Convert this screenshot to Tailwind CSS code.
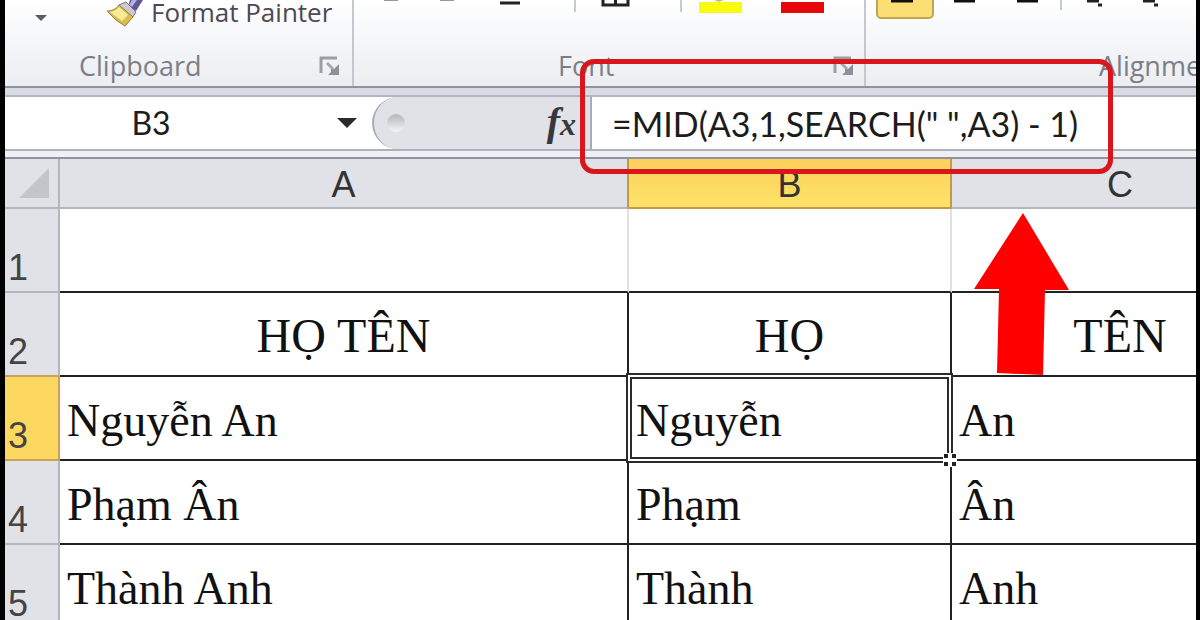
<!DOCTYPE html>
<html lang="vi">
    <head>
        <meta charset="UTF-8" />
        <meta name="viewport" content="width=device-width, initial-scale=1.0" />
        <title>Excel - MID / SEARCH</title>
        <script src="https://cdn.jsdelivr.net/npm/@tailwindcss/browser@4"></script>
    </head>
    <body class="bg-black">
        <div class="relative h-screen overflow-hidden border-l-[5px] border-r-4 border-black bg-white flex flex-col">
            <!-- Ribbon -->
            <header class="flex shrink-0 h-[88px] border-b-2 border-[#8f929e] bg-linear-to-b from-white to-[#ebedf1] font-['Open_Sans',sans-serif] text-[#7b7e88]">
                <section class="flex flex-col justify-between shrink-0 w-[349px] border-r-2 border-[#c4c7cf]">
                    <div class="flex items-start pl-[29px]">
                        <button aria-label="Paste options" class="pt-[14px]">
                            <svg class="w-[14px] h-[8px]" viewBox="0 0 14 8"><path d="M1 1h12L7 7z" fill="#5a5d66" /></svg>
                        </button>
                        <button class="flex items-start pl-[57px] text-[#4d4854]">
                            <svg class="w-[42px] h-[27px] mr-[4px]" viewBox="0 0 42 27">
                                <path d="M25 0h13l-7 11-8-5z" fill="#5d5799" />
                                <path d="M27 0h5l-5 7-3-2z" fill="#b5b0dc" />
                                <path d="M21 2l10 10-4 6L14 5z" fill="#cfcad2" stroke="#77717c" />
                                <path d="M14 5l14 12-8 9-9-6-9-9c5 0 9-2 12-6z" fill="#d9be4e" stroke="#96803a" />
                                <path d="M14 7l9 8-6 6-12-9c4-1 7-2 9-5z" fill="#f6eb96" />
                            </svg>
                            <span class="text-[26px] leading-[24px] whitespace-nowrap">Format Painter</span>
                        </button>
                    </div>
                    <div class="flex items-center justify-between pl-[74px] pr-[11px]">
                        <span class="text-[27px] leading-[40px]">Clipboard</span>
                        <button aria-label="Clipboard settings">
                            <svg class="w-[22px] h-[22px]" viewBox="0 0 22 22"><path d="M2 18V3h16" fill="none" stroke="#9b9ea6" stroke-width="3" /><path d="M8 8l6 6" stroke="#a5a8b0" stroke-width="3" /><path d="M20 9v11H9z M12 14h8v6h-8z" fill="#8e9199" /></svg>
                        </button>
                    </div>
                </section>
                <section class="flex flex-col justify-between shrink-0 w-[512px] border-r-2 border-[#c4c7cf]">
                    <svg class="w-[510px] h-[20px]" viewBox="354 0 510 20">
                        <path d="M384 0h14M440 0h14" stroke="#999" stroke-width="2" />
                        <path d="M500 3h20" stroke="#222" stroke-width="3" />
                        <path d="M575 0v12M681 0v12" stroke="#c9cbd2" stroke-width="2" />
                        <path d="M603 0v5h25V0M615.500 0v5" fill="none" stroke="#222" stroke-width="3" />
                        <rect x="699" y="2" width="43" height="11" fill="#fafa10" />
                        <path d="M714 0h10l-5 2z" fill="#c9c46a" />
                        <rect x="781" y="2" width="43" height="11" fill="#e8080c" />
                    </svg>
                    <div class="flex items-center justify-between pl-[204px] pr-[9px]">
                        <span class="text-[27px] leading-[40px]">Font</span>
                        <button aria-label="Font settings">
                            <svg class="w-[22px] h-[22px]" viewBox="0 0 22 22"><path d="M2 18V3h16" fill="none" stroke="#9b9ea6" stroke-width="3" /><path d="M8 8l6 6" stroke="#a5a8b0" stroke-width="3" /><path d="M20 9v11H9z M12 14h8v6h-8z" fill="#8e9199" /></svg>
                        </button>
                    </div>
                </section>
                <section class="flex flex-col justify-between grow overflow-hidden">
                    <svg class="w-[330px] h-[20px] shrink-0" viewBox="866 0 330 20">
                        <rect x="877" y="-20" width="56" height="38" rx="4" fill="#fbdf74" stroke="#bfa650" stroke-width="2" />
                        <path d="M891 1h22M954 1h21M1017 1h21" stroke="#111" stroke-width="3" />
                        <path d="M1061 0v10" stroke="#c9cbd2" stroke-width="2" />
                        <path d="M1087 1h12M1143 1h12M1098 5h4M1154 5h4" stroke="#222" stroke-width="3" />
                    </svg>
                    <span class="pl-[233px] text-[27px] leading-[40px]">Alignment</span>
                </section>
            </header>
            <div class="shrink-0 h-[9px] border-b-2 border-[#b3b6bf] bg-[#d9dbe3]"></div>

            <!-- Formula bar -->
            <div class="flex shrink-0 h-[54px] border-b-2 border-[#aeb1ba] bg-white font-[Lato,sans-serif] text-[34px] text-[#1c1c1c] [font-kerning:none]">
                <input aria-label="Name box" value="B3" class="w-[292px] text-center text-[32px] outline-none" />
                <button aria-label="Names" class="w-[75px] pl-[39px]">
                    <svg class="w-[22px] h-[12px]" viewBox="0 0 22 12"><path d="M1 1h20L11 11z" fill="#2b2b2b" /></svg>
                </button>
                <div class="flex items-center justify-between w-[218px] pl-[13px] pr-[14px] rounded-l-full border-l-2 border-[#a9acb5] bg-[#e0e2e8]">
                    <span class="w-[18px] h-[18px] rounded-full bg-linear-to-b from-[#b4b5b9] to-[#f6f6f8]"></span>
                    <button aria-label="Insert function" class="font-['Liberation_Serif',serif] italic font-bold text-[#38383c] text-[40px] leading-[40px]">f<span class="text-[32px]">x</span></button>
                </div>
                <input aria-label="Formula" value='=MID(A3,1,SEARCH(" ",A3) - 1)' class="grow min-w-0 pl-[20px] border-l-2 border-[#a9acb5] outline-none" />
            </div>
            <div class="shrink-0 h-[8px] border-b-2 border-[#9194a0] bg-[#eff0f6]"></div>

            <!-- Sheet -->
            <main class="grow overflow-hidden">
                <table class="table-fixed w-[1283px] border-separate border-spacing-0 font-['Liberation_Serif',serif] text-[46px] leading-[50px] text-[#111]">
                    <colgroup>
                        <col class="w-[55px]" />
                        <col class="w-[569px]" />
                        <col class="w-[323px]" />
                        <col class="w-[336px]" />
                    </colgroup>
                    <thead class="font-['Liberation_Sans',sans-serif] text-[36px] leading-[46px] text-[#333] bg-[#e0e2e8]">
                        <tr class="h-[50px]">
                            <th class="p-0 border-b-2 border-r-2 border-[#b3b6bc]">
                                <svg class="w-[30px] h-[30px] ml-[14px]" viewBox="0 0 30 30"><path d="M30 0v30H0z" fill="#c3c5ca" /></svg>
                            </th>
                            <th class="p-0 pt-[4px] leading-[44px] font-normal border-b-2 border-r-2 border-b-[#b3b6bc] border-r-[#c09a45]">A</th>
                            <th class="p-0 pt-[4px] leading-[44px] font-normal border-b-2 border-r-2 border-[#c09a45] bg-linear-to-b from-[#fdd05c] to-[#fee368]">B</th>
                            <th class="p-0 pt-[4px] leading-[44px] font-normal border-b-2 border-[#b3b6bc]">C</th>
                        </tr>
                    </thead>
                    <tbody>
                        <tr class="h-[84px]">
                            <th class="p-0 pl-[3px] align-bottom text-left font-['Liberation_Sans',sans-serif] font-normal text-[36px] leading-[46px] text-[#444] bg-[#e0e2e8] border-b-2 border-r-2 border-[#b3b6bc]">1</th>
                            <td class="border-b-2 border-r-2 border-b-[#222] border-r-[#e0e1e4]"></td>
                            <td class="border-b-2 border-r-2 border-b-[#222] border-r-[#e0e1e4]"></td>
                            <td class="border-b-2 border-[#222]"></td>
                        </tr>
                        <tr class="h-[84px] text-[48px]">
                            <th class="p-0 pl-[3px] align-bottom text-left font-['Liberation_Sans',sans-serif] font-normal text-[36px] leading-[46px] text-[#444] bg-[#e0e2e8] border-b-2 border-r-2 border-b-[#c9a15a] border-r-[#b3b6bc]">2</th>
                            <td class="p-0 pt-[4px] text-center border-b-2 border-r-2 border-[#222]">HỌ TÊN</td>
                            <td class="p-0 pt-[4px] text-center border-b-2 border-r-2 border-[#222]">HỌ</td>
                            <td class="p-0 pt-[4px] text-center border-b-2 border-[#222]">TÊN</td>
                        </tr>
                        <tr class="h-[84px]">
                            <th class="p-0 pl-[3px] align-bottom text-left font-['Liberation_Sans',sans-serif] font-normal text-[36px] leading-[46px] text-[#444] bg-[#fdd860] border-b-2 border-r-2 border-[#c9a15a]">3</th>
                            <td class="p-0 pt-[6px] pl-[7px] border-b-2 border-r-2 border-[#222]">Nguyễn An</td>
                            <td class="relative p-0 pt-[6px] pl-[7px] border-b-2 border-r-2 border-[#222]">
                                Nguyễn
                                <!-- active cell outline and fill handle -->
                                <div class="absolute -left-px -right-px -top-0.5 -bottom-0.5 border-2 border-white ring-2 ring-[#2b2b2b] inset-ring-2 inset-ring-[#2b2b2b] pointer-events-none"></div>
                                <svg class="absolute -right-[7px] -bottom-[8px] w-[14px] h-[14px]" viewBox="0 0 14 14"><path d="M0 0h14v14H0z" fill="#fff" /><path d="M1 1h4v4H1zM9 1h4v4H9zM1 9h4v4H1zM9 9h4v4H9z" fill="#222" /></svg>
                            </td>
                            <td class="p-0 pt-[6px] pl-[7px] border-b-2 border-[#222]">An</td>
                        </tr>
                        <tr class="h-[84px]">
                            <th class="p-0 pl-[3px] align-bottom text-left font-['Liberation_Sans',sans-serif] font-normal text-[36px] leading-[46px] text-[#444] bg-[#e0e2e8] border-b-2 border-r-2 border-[#b3b6bc]">4</th>
                            <td class="p-0 pt-[6px] pl-[7px] border-b-2 border-r-2 border-[#222]">Phạm Ân</td>
                            <td class="p-0 pt-[6px] pl-[7px] border-b-2 border-r-2 border-[#222]">Phạm</td>
                            <td class="p-0 pt-[6px] pl-[7px] border-b-2 border-[#222]">Ân</td>
                        </tr>
                        <tr class="h-[84px]">
                            <th class="p-0 pl-[3px] align-bottom text-left font-['Liberation_Sans',sans-serif] font-normal text-[36px] leading-[46px] text-[#444] bg-[#e0e2e8] border-b-2 border-r-2 border-[#b3b6bc]">5</th>
                            <td class="p-0 pt-[6px] pl-[7px] border-b-2 border-r-2 border-[#222]">Thành Anh</td>
                            <td class="p-0 pt-[6px] pl-[7px] border-b-2 border-r-2 border-[#222]">Thành</td>
                            <td class="p-0 pt-[6px] pl-[7px] border-b-2 border-[#222]">Anh</td>
                        </tr>
                    </tbody>
                </table>
            </main>

            <!-- Annotations over the sheet -->
            <div class="absolute left-[575px] top-[59px] w-[533px] h-[115px] rounded-[14px] border-[5px] border-[#d9161b] pointer-events-none"></div>
            <svg class="absolute left-[968px] top-[211px] w-[98px] h-[166px] pointer-events-none" viewBox="973 211 98 166">
                <path d="M1023 213L1069 290H1045L1043 375L997 373L999 289H974z" fill="#fe0000" />
            </svg>
        </div>
    </body>
</html>
